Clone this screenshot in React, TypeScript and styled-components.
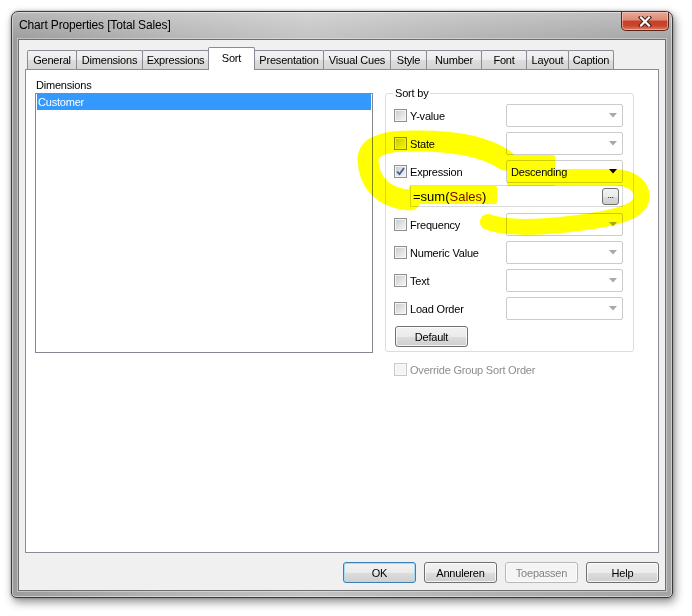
import React from "react";
import styled, { createGlobalStyle } from "styled-components";

const GlobalStyle = createGlobalStyle`
  html, body { margin: 0; padding: 0; background: #ffffff; }
  body { font-family: "Liberation Sans", Arial, sans-serif; font-size: 11px; color: #000; }
  * { box-sizing: border-box; }
`;

const Page = styled.div`
  position: relative;
  width: 692px;
  height: 616px;
  padding: 11px 0 0 11px;
  background: #ffffff;
  overflow: hidden;
`;

const Window = styled.div`
  width: 662px;
  height: 587px;
  display: flex;
  flex-direction: column;
  border: 1px solid #3c3c3c;
  border-radius: 7px 7px 5px 5px;
  padding: 0 6px 6px 6px;
  background:
    linear-gradient(to bottom, rgba(255,255,255,0.28), rgba(255,255,255,0) 28px),
    linear-gradient(to right, #9c9c9c 0%, #b3b3b3 22%, #c3c3c3 45%, #b4b4b4 68%, #a4a4a4 100%);
  box-shadow: 2px 4px 10px rgba(0,0,0,0.45), 0 0 3px rgba(0,0,0,0.3),
    inset 0 0 0 1px rgba(255,255,255,0.45);
`;

const TitleBar = styled.div`
  height: 27px;
  display: flex;
  align-items: flex-start;
  justify-content: space-between;
  flex: none;
`;

const Title = styled.div`
  margin: 6px 0 0 1px;
  font-size: 12px;
  line-height: 14px;
  letter-spacing: -0.15px;
  color: #000;
`;

const CloseButton = styled.div`
  width: 48px;
  height: 19px;
  margin-right: -3px;
  border: 1px solid #5b2418;
  border-top: none;
  border-radius: 0 0 5px 5px;
  background: linear-gradient(to bottom, #e9a999 0%, #dc8a76 45%, #c5402a 50%, #c8452c 75%, #dd7b63 100%);
  box-shadow: inset 0 0 0 1px rgba(255, 210, 200, 0.55);
  display: flex;
  align-items: center;
  justify-content: center;
`;

const Client = styled.div`
  flex: 1;
  display: flex;
  flex-direction: column;
  background: #f0f0f0;
  border: 1px solid #6f6f6f;
  box-shadow: 0 0 0 1px rgba(255,255,255,0.35);
  padding: 7px 6px 7px 6px;
`;

const TabStrip = styled.div`
  position: relative;
  z-index: 1;
  display: flex;
  align-items: flex-end;
  height: 23px;
  margin-bottom: -1px;
  padding-left: 2px;
  flex: none;
`;

const Tab = styled.div<{ $w: number; $active?: boolean }>`
  position: relative;
  z-index: ${(p) => (p.$active ? 2 : 1)};
  width: ${(p) => p.$w}px;
  height: ${(p) => (p.$active ? 23 : 19)}px;
  margin-bottom: ${(p) => (p.$active ? 0 : 1)}px;
  margin-left: -1px;
  border: 1px solid #898c95;
  border-bottom: none;
  border-radius: 2px 2px 0 0;
  background: ${(p) =>
    p.$active
      ? "#ffffff"
      : "linear-gradient(to bottom, #f2f2f2 0%, #ebebeb 50%, #dddddd 51%, #d4d4d4 100%)"};
  display: flex;
  justify-content: center;
  align-items: ${(p) => (p.$active ? "flex-start" : "center")};
  padding-top: ${(p) => (p.$active ? 3 : 0)}px;
  line-height: 14px;
  white-space: nowrap;
  letter-spacing: -0.2px;
  &:first-child { margin-left: 0; }
`;

const Panel = styled.div`
  flex: 1;
  background: #ffffff;
  border: 1px solid #898c95;
  padding: 8px 9px;
  display: flex;
  gap: 12px;
  align-items: flex-start;
`;

const LeftColumn = styled.div`
  width: 338px;
  display: flex;
  flex-direction: column;
  flex: none;
`;

const FieldLabel = styled.div`
  line-height: 14px;
  margin: 0 0 1px 1px;
  letter-spacing: -0.2px;
`;

const ListBox = styled.div`
  height: 260px;
  border: 1px solid #828790;
  padding: 0 1px;
  background: #fff;
`;

const ListItem = styled.div<{ $selected?: boolean }>`
  height: 16px;
  line-height: 16px;
  padding-left: 1px;
  background: ${(p) => (p.$selected ? "#3399ff" : "transparent")};
  color: ${(p) => (p.$selected ? "#ffffff" : "#000")};
  letter-spacing: -0.2px;
`;

const RightColumn = styled.div`
  width: 249px;
  display: flex;
  flex-direction: column;
  flex: none;
`;

const GroupBox = styled.fieldset`
  margin: 8px 0 0 0;
  padding: 4px 10px 4px 8px;
  border: 1px solid #d5dfe5;
  border-radius: 3px;
  display: flex;
  flex-direction: column;
  gap: 5px;
  min-width: 0;
`;

const Legend = styled.legend`
  padding: 0 2px;
  margin-left: -1px;
  line-height: 14px;
  letter-spacing: -0.2px;
`;

const SortRow = styled.div`
  display: flex;
  align-items: center;
  height: 23px;
`;

const CheckLabel = styled.label<{ $disabled?: boolean }>`
  flex: 1;
  display: flex;
  align-items: center;
  gap: 3px;
  color: ${(p) => (p.$disabled ? "#8d8d8d" : "#000")};
  letter-spacing: -0.2px;
  white-space: nowrap;
`;

const CheckBox = styled.span<{ $disabled?: boolean }>`
  width: 13px;
  height: 13px;
  flex: none;
  display: flex;
  align-items: center;
  justify-content: center;
  border: 1px solid ${(p) => (p.$disabled ? "#c9c9c9" : "#8e8f8f")};
  background: ${(p) =>
    p.$disabled
      ? "#f4f4f4"
      : "linear-gradient(135deg, #c4c8ce 0%, #e2e3e5 55%, #f6f6f6 100%)"};
  box-shadow: inset 0 0 0 1px ${(p) => (p.$disabled ? "#f9f9f9" : "#f4f4f4")};
`;

const Combo = styled.div<{ $strong?: boolean }>`
  width: 117px;
  height: 23px;
  flex: none;
  border: 1px solid ${(p) => (p.$strong ? "#cdcdcd" : "#cbcbcb")};
  border-radius: 2px;
  background: #ffffff;
  display: flex;
  align-items: center;
  justify-content: space-between;
  padding: 0 5px 0 4px;
  letter-spacing: -0.2px;
`;

const ExprBox = styled.div`
  margin: -3px 0 1px 16px;
  height: 22px;
  border: 1px solid #d9d9d9;
  background: #fff;
  display: flex;
  align-items: center;
  justify-content: space-between;
  padding: 0 3px 0 2px;
  font-size: 13px;
`;

const FuncText = styled.span<{ $field?: boolean }>`
  color: ${(p) => (p.$field ? "#800000" : "#000")};
`;

const EllipsisButton = styled.div`
  width: 17px;
  height: 17px;
  border: 1px solid #707070;
  border-radius: 3px;
  background: linear-gradient(to bottom, #f2f2f2 0%, #ebebeb 50%, #dddddd 51%, #cfcfcf 100%);
  font-size: 9px;
  line-height: 12px;
  text-align: center;
  letter-spacing: -0.5px;
`;

const PushButton = styled.div<{ $variant?: "focus" | "disabled" }>`
  width: 73px;
  height: 21px;
  flex: none;
  border-radius: 3px;
  border: 1px solid
    ${(p) => (p.$variant === "focus" ? "#3c7fb1" : p.$variant === "disabled" ? "#b5b9bc" : "#707070")};
  background: ${(p) =>
    p.$variant === "disabled"
      ? "#f4f4f4"
      : "linear-gradient(to bottom, #f2f2f2 0%, #ebebeb 50%, #dddddd 51%, #cfcfcf 100%)"};
  box-shadow: inset 0 0 0 1px
    ${(p) => (p.$variant === "focus" ? "#a6dcf5" : p.$variant === "disabled" ? "#fbfbfb" : "rgba(255,255,255,0.75)")};
  color: ${(p) => (p.$variant === "disabled" ? "#838383" : "#000")};
  display: flex;
  align-items: center;
  justify-content: center;
  letter-spacing: -0.2px;
`;

const DefaultButton = styled(PushButton)`
  margin: 1px 0 0 1px;
`;

const OverrideRow = styled.div`
  margin: 11px 0 0 9px;
  height: 13px;
  display: flex;
`;

const ButtonRow = styled.div`
  display: flex;
  justify-content: flex-end;
  gap: 8px;
  margin-top: 9px;
  flex: none;
`;

const Highlight = styled.svg`
  position: absolute;
  left: 0;
  top: 0;
  width: 692px;
  height: 616px;
  pointer-events: none;
  mix-blend-mode: multiply;
`;

const Arrow = ({ dark }: { dark?: boolean }) => (
  <svg width="8" height="5" viewBox="0 0 8 5">
    <path d="M0 0 L8 0 L4 4.5 Z" fill={dark ? "#000" : "#a8a8a8"} />
  </svg>
);

const Check = () => (
  <svg width="11" height="11" viewBox="0 0 11 11">
    <path d="M2 5.5 L4.5 8.2 L9 2" fill="none" stroke="#3d5a9c" strokeWidth="1.8" />
  </svg>
);

const CloseX = () => (
  <svg width="14" height="11" viewBox="0 0 14 11">
    <path d="M3 1.5 L11 9.5 M11 1.5 L3 9.5" stroke="#4a1d14" strokeWidth="4.2" strokeLinecap="square" />
    <path d="M3 1.5 L11 9.5 M11 1.5 L3 9.5" stroke="#ffffff" strokeWidth="2.2" strokeLinecap="square" />
  </svg>
);

const tabs: { label: string; w: number; active?: boolean }[] = [
  { label: "General", w: 50 },
  { label: "Dimensions", w: 67 },
  { label: "Expressions", w: 67 },
  { label: "Sort", w: 47, active: true },
  { label: "Presentation", w: 70 },
  { label: "Visual Cues", w: 68 },
  { label: "Style", w: 37 },
  { label: "Number", w: 56 },
  { label: "Font", w: 46 },
  { label: "Layout", w: 43 },
  { label: "Caption", w: 46 },
];

type Row = { label: string; value?: string; checked?: boolean };
const rowsTop: Row[] = [
  { label: "Y-value" },
  { label: "State" },
  { label: "Expression", value: "Descending", checked: true },
];
const rowsBottom: Row[] = [
  { label: "Frequency" },
  { label: "Numeric Value" },
  { label: "Text" },
  { label: "Load Order" },
];

const SortOption = ({ row }: { row: Row }) => (
  <SortRow>
    <CheckLabel>
      <CheckBox>{row.checked && <Check />}</CheckBox>
      {row.label}
    </CheckLabel>
    <Combo $strong={!!row.value}>
      <span>{row.value ?? ""}</span>
      <Arrow dark={!!row.value} />
    </Combo>
  </SortRow>
);

export default function App() {
  return (
    <Page>
      <GlobalStyle />
      <Window>
        <TitleBar>
          <Title>Chart Properties [Total Sales]</Title>
          <CloseButton>
            <CloseX />
          </CloseButton>
        </TitleBar>
        <Client>
          <TabStrip>
            {tabs.map((t) => (
              <Tab key={t.label} $w={t.w} $active={t.active}>
                {t.label}
              </Tab>
            ))}
          </TabStrip>
          <Panel>
            <LeftColumn>
              <FieldLabel>Dimensions</FieldLabel>
              <ListBox>
                <ListItem $selected>Customer</ListItem>
              </ListBox>
            </LeftColumn>
            <RightColumn>
              <GroupBox>
                <Legend>Sort by</Legend>
                {rowsTop.map((r) => (
                  <SortOption key={r.label} row={r} />
                ))}
                <ExprBox>
                  <span>
                    <FuncText>=sum(</FuncText>
                    <FuncText $field>Sales</FuncText>
                    <FuncText>)</FuncText>
                  </span>
                  <EllipsisButton>...</EllipsisButton>
                </ExprBox>
                {rowsBottom.map((r) => (
                  <SortOption key={r.label} row={r} />
                ))}
                <DefaultButton>Default</DefaultButton>
              </GroupBox>
              <OverrideRow>
                <CheckLabel $disabled>
                  <CheckBox $disabled />
                  Override Group Sort Order
                </CheckLabel>
              </OverrideRow>
            </RightColumn>
          </Panel>
          <ButtonRow>
            <PushButton $variant="focus">OK</PushButton>
            <PushButton>Annuleren</PushButton>
            <PushButton $variant="disabled">Toepassen</PushButton>
            <PushButton>Help</PushButton>
          </ButtonRow>
        </Client>
      </Window>
      <Highlight viewBox="0 0 692 616">
        <g fill="none" stroke="#ffff00" strokeLinecap="round" strokeLinejoin="round">
          <path d="M505 160 C485 146 450 140 410 141 C385 141 368 146 368 160 C369 180 380 198 410 200" strokeWidth="21" />
          <path d="M553 177 L612 177 C635 177 646 190 640 203 C632 216 600 221 560 225 C530 228 505 228 488 222" strokeWidth="16" />
        </g>
        <g fill="#ffff00">
          <rect x="507" y="155" width="48" height="31" rx="2" />
          <rect x="409" y="186" width="88" height="18" rx="2" />
        </g>
      </Highlight>
    </Page>
  );
}
